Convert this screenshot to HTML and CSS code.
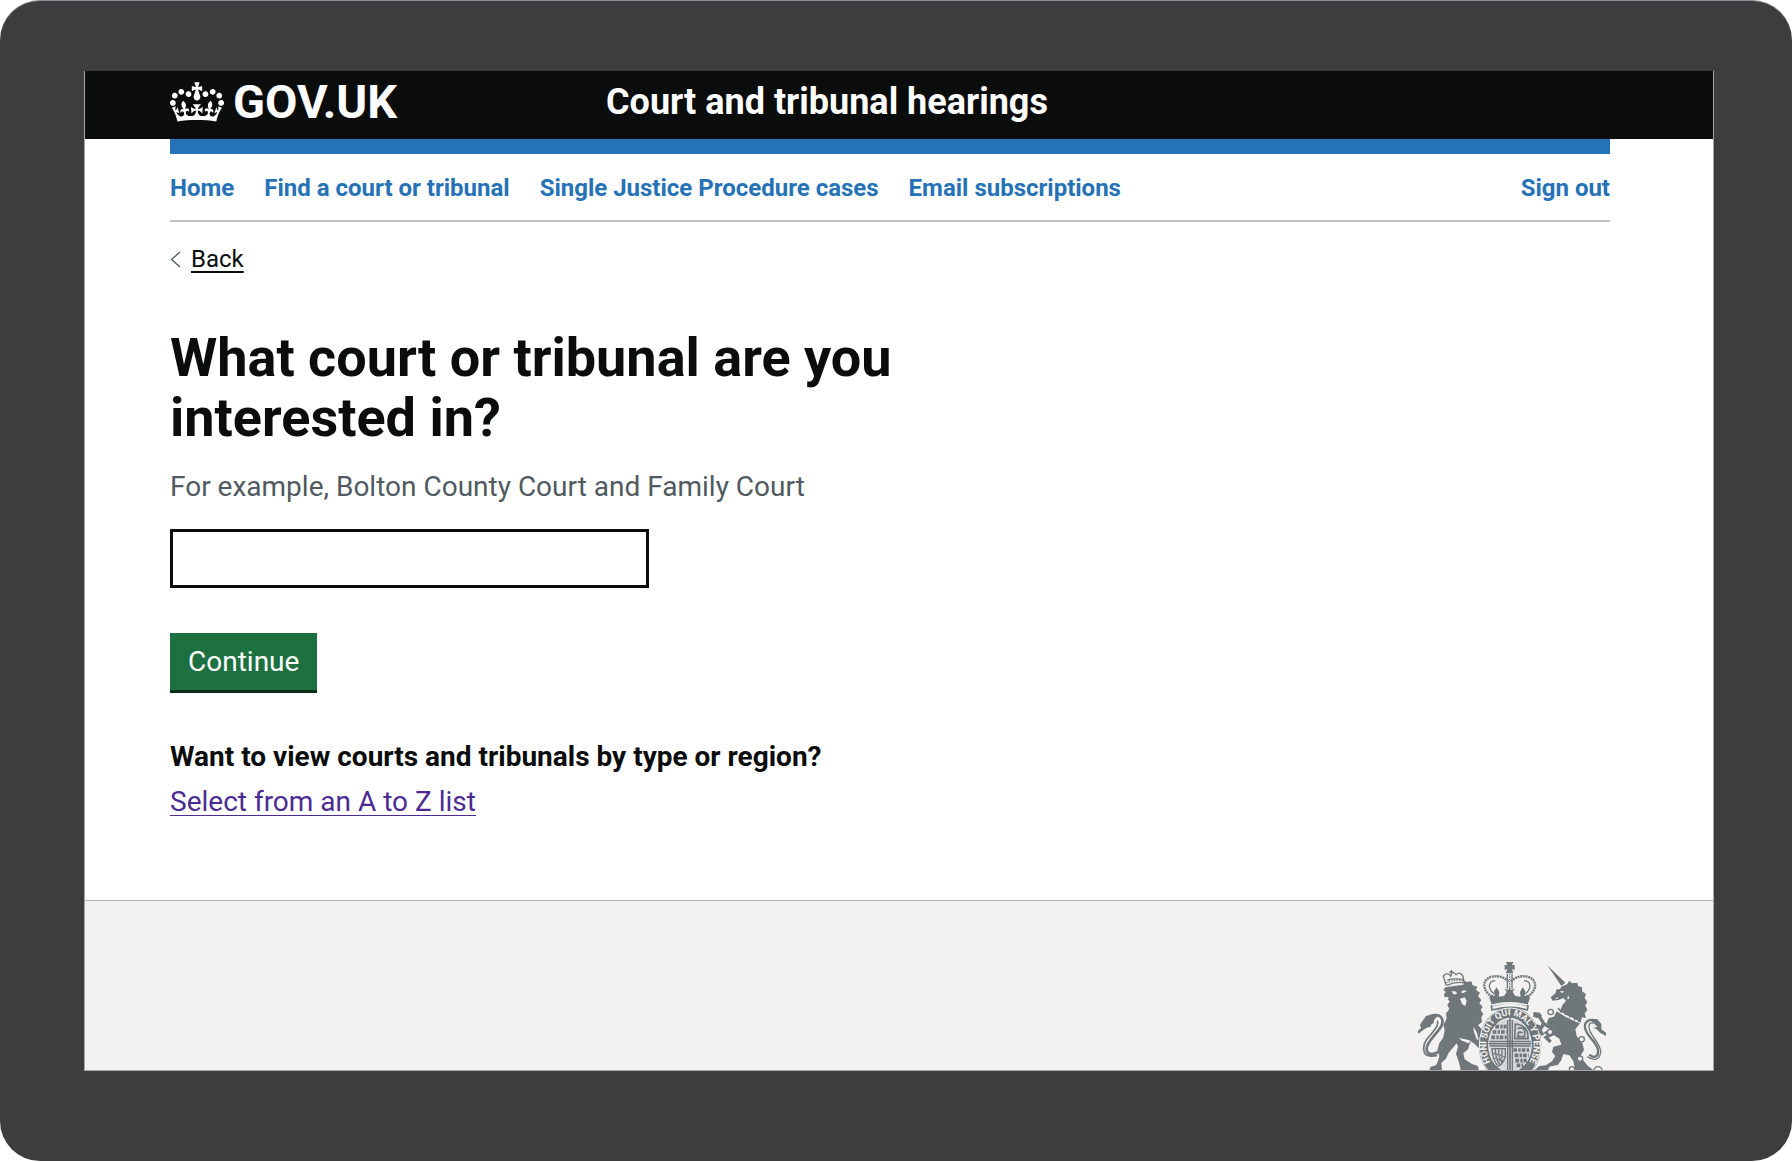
FILE: index.html
```
<!DOCTYPE html>
<html lang="en">

<head>
  <meta charset="utf-8">
  <meta name="viewport" content="width=device-width, initial-scale=1">
  <title>Court and tribunal hearings</title>
  <link rel="stylesheet" href="styles.css">
</head>

<body>

  <div class="device">
    <div class="screen">

      <header class="header">
        <a class="logo" href="#">
          <svg class="crown" viewBox="0 0 132 97" aria-hidden="true">
            <path fill="currentColor" d="M25 30.2c3.5 1.5 7.7-.2 9.1-3.7 1.5-3.6-.2-7.8-3.9-9.2-3.6-1.4-7.6.3-9.1 3.9-1.4 3.5.3 7.5 3.9 9zM9 39.5c3.6 1.5 7.8-.2 9.2-3.7 1.5-3.6-.2-7.8-3.9-9.1-3.6-1.5-7.6.2-9.1 3.8-1.4 3.5.3 7.5 3.8 9zM4.4 57.2c3.5 1.5 7.7-.2 9.1-3.8 1.5-3.6-.2-7.7-3.9-9.1-3.5-1.5-7.6.3-9.1 3.8-1.4 3.5.3 7.6 3.9 9.1zm38.3-21.4c3.5 1.5 7.7-.2 9.1-3.8 1.5-3.6-.2-7.7-3.9-9.1-3.6-1.5-7.6.3-9.1 3.8-1.3 3.6.4 7.7 3.9 9.1zm64.4-5.6c-3.6 1.5-7.8-.2-9.1-3.7-1.5-3.6.2-7.8 3.8-9.2 3.6-1.4 7.7.3 9.2 3.9 1.3 3.5-.4 7.5-3.9 9zm15.9 9.3c-3.6 1.5-7.7-.2-9.1-3.7-1.5-3.6.2-7.8 3.7-9.1 3.6-1.5 7.7.2 9.2 3.8 1.5 3.5-.3 7.5-3.8 9zm4.7 17.7c-3.6 1.5-7.8-.2-9.2-3.8-1.5-3.6.2-7.7 3.9-9.1 3.6-1.5 7.7.3 9.2 3.8 1.3 3.5-.4 7.6-3.9 9.1zM89.3 35.8c-3.6 1.5-7.8-.2-9.2-3.8-1.4-3.6.2-7.7 3.9-9.1 3.6-1.5 7.7.3 9.2 3.8 1.4 3.6-.3 7.7-3.9 9.1zM69.7 17.7l8.9 4.7V9.3l-8.9 2.8c-.2-.3-.5-.6-.9-.9L72.4 0H59.6l3.5 11.2c-.3.3-.6.5-.9.9l-8.8-2.8v13.1l8.8-4.7c.3.3.6.7.9.9l-5 15.4v.1c-.2.8-.4 1.6-.4 2.4 0 4.1 3.1 7.5 7 8.1h.2c.3 0 .7.1 1 .1.4 0 .7 0 1-.1h.2c4-.6 7.1-4.1 7.1-8.1 0-.8-.1-1.7-.4-2.4V34l-5.1-15.4c.4-.2.7-.6 1-.9zM66 92.8c16.9 0 32.8 1.1 47.1 3.2 4-16.9 8.9-26.7 14-33.5l-9.6-3.4c1 4.9 1.1 7.2 0 10.2-1.5-1.4-3-4.3-4.2-8.7L108.6 76c2.8-2 5-3.2 7.5-3.3-4.4 9.4-10 11.9-13.6 11.2-4.3-.8-6.3-4.6-5.6-7.9 1-4.7 5.7-5.9 8-.5 4.3-8.7-3-11.4-7.6-8.8 7.1-7.2 7.9-13.5 2.1-21.1-8 6.1-8.1 12.3-4.5 20.8-4.7-5.4-12.1-2.5-9.5 6.2 3.4-5.2 7.9-2 7.2 3.1-.6 4.3-6.4 7.8-13.5 7.2-10.3-.9-10.9-8-11.2-13.8 2.5-.5 7.1 1.8 11 7.3L80.2 60c-4.1 4.4-8 5.3-12.3 5.4 1.4-4.4 8-11.6 8-11.6H55.5s6.4 7.2 7.9 11.6c-4.2-.1-8-1-12.3-5.4l1.4 16.4c3.9-5.5 8.5-7.7 10.9-7.3-.3 5.8-.9 12.8-11.1 13.8-7.2.6-12.9-2.9-13.5-7.2-.7-5 3.8-8.3 7.1-3.1 2.7-8.7-4.6-11.6-9.4-6.2 3.7-8.5 3.6-14.7-4.6-20.8-5.8 7.6-5 13.9 2.2 21.1-4.7-2.6-11.9.1-7.7 8.8 2.3-5.5 7.1-4.2 8.1.5.7 3.3-1.3 7.1-5.7 7.9-3.5.7-9-1.8-13.5-11.2 2.5.1 4.7 1.3 7.5 3.3l-4.7-15.4c-1.2 4.4-2.7 7.2-4.3 8.7-1.1-3-.9-5.3 0-10.2l-9.5 3.4c5 6.9 9.9 16.7 14 33.5 14.8-2.1 30.8-3.2 47.7-3.2z"/>
          </svg>
          <span>GOV.UK</span>
        </a>
        <a class="service" href="#">Court and tribunal hearings</a>
      </header>

      <div class="container">
        <nav class="nav">
          <a href="#">Home</a>
          <a href="#">Find a court or tribunal</a>
          <a href="#">Single Justice Procedure cases</a>
          <a href="#">Email subscriptions</a>
          <a class="sign-out" href="#">Sign out</a>
        </nav>

        <a class="back" href="#">
          <svg class="chevron" viewBox="0 0 11 17" aria-hidden="true">
            <path d="M10 1L1.500 8.500L10 16" fill="none" stroke="currentColor" stroke-width="1.300"/>
          </svg>
          <span>Back</span>
        </a>

        <main>
          <form class="search">
            <h1><label for="court">What court or tribunal are you interested in?</label></h1>
            <p class="hint" id="court-hint">For example, Bolton County Court and Family Court</p>
            <input id="court" name="court" type="text" autocomplete="off" aria-describedby="court-hint">
            <button type="button">Continue</button>
          </form>
          <h2>Want to view courts and tribunals by type or region?</h2>
          <a class="list-link" href="#">Select from an A to Z list</a>
        </main>
      </div>

      <footer class="footer">
        <svg class="crest" viewBox="54 36 564 324" role="img" aria-label="Royal coat of arms">
          <defs>
            <path id="garter" d="M330 374A71 89 0 0 1 330 196A71 89 0 0 1 330 374"/>
          </defs>

          <!-- lion -->
          <path class="line" stroke-width="8" d="M54 248C64 238 76 226 92 226M98 196C126 190 134 212 122 232C108 254 84 272 80 294C78 312 94 318 114 306"/>
          <path class="line" stroke-width="5" d="M112 212C118 226 104 238 92 254C72 274 66 292 74 310C82 322 98 318 112 316"/>
          <path class="solid" d="M54 246L64 238L60 224L68 212L78 198L98 192L116 196L104 208L100 220L84 230Z"/>
          <path class="solid" d="M136 112L190 104L192 92L202 96L214 94L218 106L232 110L228 120L240 128L234 138L244 150L238 160L248 170L242 180L250 192L244 202L246 216L234 226L242 234L258 254L262 280L250 290L258 312L268 326L256 342L244 328L238 296L224 282L212 274L204 298L190 310L194 328L216 342L234 348L236 360H182L176 334L168 312L174 290L170 280L146 308L138 326L124 338L126 360H88L92 350L108 346L114 334L118 318L112 300L118 280L130 262L134 240L130 224L140 206L138 190L148 178L142 164L150 154L144 150L146 140L134 142L132 132L138 126L130 120Z"/>
          <path class="paper" d="M154 124L166 124L172 130L162 134ZM182 126L192 120L200 124L188 130ZM180 146L194 142L200 152L196 168L186 162Z"/>
          <path class="paper" d="M176 264L196 268L212 272L206 280L186 272ZM220 230L230 246L236 270L230 268L222 246Z"/>
          <path class="line" stroke-width="4" d="M138 106L130 78Q142 64 152 78Q156 58 168 74Q182 62 190 82L192 98M140 106Q164 94 192 98M142 90Q164 84 190 88M154 60V76M148 66H160"/>
          <path class="line" stroke-width="4" stroke-dasharray="4 4" d="M138 98Q164 88 190 92"/>

          <!-- crown -->
          <path class="solid" d="M318 36H340L336 46L344 44V60L336 57L340 70H318L322 57L314 60V44L322 46Z"/>
          <path class="line" stroke-width="7" stroke-dasharray="6 2" d="M276 140C246 122 244 88 276 80C298 76 314 82 326 96M382 140C412 122 414 88 382 80C360 76 344 82 332 96"/>
          <path class="line" stroke-width="4" d="M282 132C262 114 264 94 286 92M376 132C396 114 394 94 372 92M322 72V116M336 72V116"/>
          <path class="line" stroke-width="4" stroke-dasharray="4 3" d="M329 72V118"/>
          <path class="solid" d="M272 134L284 138L282 124L290 112L298 126L296 140L312 138L320 126L314 116L326 120L329 108L332 120L344 116L338 126L346 138L362 140L360 126L368 112L376 124L374 138L386 134L390 144L382 166Q330 150 276 166L268 144Z"/>
          <path class="line" stroke-width="5" d="M274 168Q330 150 384 168L382 180Q330 164 276 180Z"/>
          <path class="paper" d="M276 163Q330 149 382 163L381 168Q330 154 277 168Z"/>

          <!-- garter and shield -->
          <ellipse class="solid" cx="330" cy="285" rx="94" ry="113"/>
          <ellipse class="ring" cx="330" cy="285" rx="92" ry="111"/>
          <text class="motto"><textPath href="#garter" startOffset="50%" text-anchor="middle">HONI SOIT QUI MAL Y PENSE</textPath></text>
          <ellipse class="shield" cx="330" cy="285" rx="64" ry="80"/>
          <path class="line" stroke-width="5" d="M330 205V360M266 281H394"/>
          <path class="line" stroke-width="4" d="M323 210V360M337 210V360M268 274H392M268 288H392"/>
          <path class="line" stroke-width="11" stroke-dasharray="11 4 7 3" d="M286 230H320M278 246H320M274 262H320M340 300H388M344 316H386M346 332H380M350 346H370"/>
          <path class="line" stroke-width="5" d="M346 222Q386 226 384 266H344ZM352 236Q366 230 374 240V260H350M356 258Q350 242 368 248"/>
          <path class="line" stroke-width="4" d="M276 296H316V320Q308 344 294 348Q278 330 276 296ZM286 296Q286 326 300 344M296 296Q294 320 306 338M306 296V328M280 310L316 320M284 324L310 334"/>

          <!-- unicorn -->
          <path class="solid" d="M442 46L496 98L484 108Z"/>
          <path class="solid" d="M484 110L502 102L508 92L516 100L532 98L534 108L546 112L546 124L558 132L554 144L562 156L556 166L562 180L554 190L558 204L546 202L542 218L524 206L500 196L480 182L488 164L498 152L490 144L476 150L458 152L452 142L466 130L470 118L480 118Z"/>
          <path class="paper" d="M480 123L492 124L486 130ZM466 144L476 142L470 148ZM504 134L508 146L502 148Z"/>
          <path class="line" stroke-width="5" d="M474 174L484 186L490 176L496 192L506 182L510 200L520 190L524 208L534 200L538 216"/>
          <path class="solid" d="M470 184L496 200L524 214L540 220L526 238L530 258L548 282L552 300L542 316L552 334L564 348L580 360H526L520 334L508 316L490 312L484 330L474 344L448 350L444 360H404L418 348L438 346L456 334L466 318L456 306L460 290L484 284L478 266L460 254L442 256L430 248L444 240L460 238L440 220L446 204L462 200Z"/>
          <path class="line" stroke-width="10" d="M458 236L432 222L416 196L402 194M462 250L438 262L452 276M430 222L420 240L428 256"/>
          <path class="solid" d="M400 186L420 188L426 198L410 204L400 200ZM410 222L432 230L424 240L408 234Z"/>
          <circle class="chain" cx="452" cy="186" r="8"/>
          <circle class="chain" cx="450" cy="246" r="8"/>
          <circle class="chain" cx="545" cy="268" r="8"/>
          <circle class="chain" cx="540" cy="326" r="8"/>
          <circle class="chain" cx="516" cy="358" r="8"/>
          <circle class="chain" cx="594" cy="362" r="12"/>
          <path class="line" stroke-width="7" d="M588 212C562 204 548 220 558 242C566 264 592 278 594 300C596 318 584 328 568 314"/>
          <path class="line" stroke-width="4" d="M580 220C566 214 564 230 570 244C582 268 604 286 602 308C598 330 582 334 562 320"/>
          <path class="solid" d="M568 208L592 208L604 222L604 238L618 248V258L600 248L590 238L580 234L592 230L580 218Z"/>
        </svg>
      </footer>

    </div>
  </div>

</body>

</html>
```
FILE: styles.css
```
* { box-sizing: border-box; }

body {
  margin: 0;
  background: #fff;
  color: #0b0c0c;
  font-family: Roboto, "Liberation Sans", Arial, sans-serif;
  font-size: 28px;
  line-height: 38px;
}

h1, h2, p { margin: 0; }

/* dark bezel around the page */
.device {
  display: flex;
  min-height: calc(100vh - 1px);
  padding: 70px 78px 90px 84px;
  background: #3d3d3f;
  border-top: 1px solid #8f9294;
  border-radius: 40px;
}

.screen {
  flex: 1;
  display: flex;
  flex-direction: column;
  background: #fff;
  border: 1px solid #a6a6a8;
  border-top: none;
}

.header, .container, .footer { padding: 0 103px 0 85px; }

/* header */
.header {
  display: grid;
  grid-template-columns: 436px 1fr;
  align-items: center;
  height: 68px;
  padding-bottom: 7px;
  background: #0b0c0c;
}
.header a { color: #fff; font-weight: bold; text-decoration: none; }
.logo { display: flex; align-items: center; gap: 9px; font-size: 47px; }
.crown { width: 54px; height: 40px; }
.service { font-size: 36px; }

/* navigation */
.nav {
  display: flex;
  gap: 30px;
  padding: 20px 0 18px;
  border-top: 15px solid #2572b6;
  border-bottom: 2px solid #bfc1c3;
  font-size: 24px;
  line-height: 28px;
}
.nav a { color: #2572b6; font-weight: bold; text-decoration: none; }
.nav .sign-out { margin-left: auto; }

.back {
  display: flex;
  align-items: center;
  gap: 10px;
  width: max-content;
  margin-top: 22px;
  color: #0b0c0c;
  font-size: 24px;
  line-height: 30px;
  text-decoration: none;
}
.back span { text-decoration: underline; text-decoration-thickness: 2px; text-underline-offset: 4px; }
.chevron { width: 11px; height: 17px; color: #505a5f; }

/* main content */
main { padding: 54px 0 79px; }
.search { display: flex; flex-direction: column; align-items: flex-start; max-width: 960px; }
h1 { font-size: 54px; line-height: 60px; }
.hint { margin-top: 20px; color: #505a5f; }

input {
  width: 100%;
  max-width: 479px;
  height: 59px;
  margin-top: 23px;
  padding: 8px;
  border: 3px solid #0b0c0c;
  border-radius: 0;
  font: inherit;
}
button {
  height: 60px;
  margin: 45px 0;
  padding: 0 18px;
  border: none;
  border-bottom: 3px solid #082d1b;
  background: #1d7040;
  color: #fff;
  font: inherit;
  cursor: pointer;
}
h2 { margin-bottom: 7px; font-size: 28px; line-height: 38px; }
.list-link {
  display: block;
  width: max-content;
  color: #4c2c92;
  text-decoration-thickness: 1px;
  text-underline-offset: 4px;
}

/* footer */
.footer {
  flex: 1;
  display: flex;
  justify-content: flex-end;
  align-items: flex-start;
  padding-top: 61px;
  padding-right: 107px;
  background: #f3f2f1;
  border-top: 1px solid #b1b4b6;
}
.crest { width: 188px; height: 108px; }
.crest .solid { fill: #6f777b; }
.crest .paper { fill: #f3f2f1; }
.crest .line { fill: none; stroke: #6f777b; }
.crest .ring { fill: none; stroke: #f3f2f1; stroke-width: 3; }
.crest .shield { fill: #d5d7d8; stroke: #f3f2f1; stroke-width: 3; }
.crest .chain { fill: #f3f2f1; stroke: #6f777b; stroke-width: 4; }
.crest .motto { fill: #f3f2f1; font-size: 27px; font-weight: bold; }
```
